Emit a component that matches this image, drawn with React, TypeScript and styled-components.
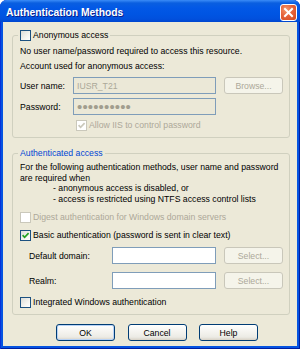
import React from "react";
import styled, { createGlobalStyle } from "styled-components";

const GlobalStyle = createGlobalStyle`
  html, body { margin: 0; padding: 0; background: #ffffff; }
  body {
    font-family: "Liberation Sans", Arial, sans-serif;
    font-size: 8.7px;
    color: #000000;
  }
  * { box-sizing: border-box; }
`;

const Window = styled.div`
  width: 300px;
  height: 349px;
  display: flex;
  flex-direction: column;
  background: #0553e1;
  border-radius: 7px 7px 0 0;
  overflow: hidden;
  box-shadow: inset 1px 0 0 #0831d9, inset -1px 0 0 #001ea0, inset 0 -1px 0 #001ea0;
`;

const TitleBar = styled.div`
  height: 22px;
  flex: none;
  display: flex;
  align-items: center;
  justify-content: space-between;
  padding: 2px 3px 0 6px;
  background: linear-gradient(
    to bottom,
    #3b8cf7 0px,
    #0a5fe0 3px,
    #0258e6 8px,
    #0055e3 14px,
    #0150dd 19px,
    #0046cf 22px
  );
`;

const Title = styled.span`
  color: #ffffff;
  font-weight: bold;
  font-size: 10.3px;
  text-shadow: 1px 1px 0 #0a1e8c;
  margin-top: 1px;
`;

const CloseButton = styled.div`
  width: 17px;
  height: 17px;
  border: 1px solid #ffffff;
  border-radius: 3px;
  background: radial-gradient(circle at 35% 30%, #f59a6c 0%, #e6623a 45%, #d2491f 100%);
  display: flex;
  align-items: center;
  justify-content: center;
`;

const Body = styled.div`
  flex: 1;
  min-width: 0;
  margin: 0 3px 3px 3px;
  background: #ece9d8;
  display: flex;
  flex-direction: column;
  padding: 8px 7px 5px 9px;
`;

const GroupBox = styled.fieldset<{ $pt: number; $mt?: number }>`
  margin: ${(p) => p.$mt ?? 0}px 0 0 0;
  border: 1px solid #d0d0bf;
  border-radius: 3px;
  padding: ${(p) => p.$pt}px 6px 6px 7px;
  min-width: 0;
  display: flex;
  flex-direction: column;
`;

const Legend = styled.legend<{ $blue?: boolean }>`
  padding: 0 2px;
  margin-left: -2px;
  height: 11px;
  line-height: 11px;
  display: flex;
  align-items: center;
  gap: 2px;
  color: ${(p) => (p.$blue ? "#0046d5" : "#000000")};
`;

const Line = styled.div<{ $mt?: number }>`
  line-height: 11px;
  height: 11px;
  white-space: nowrap;
  margin-top: ${(p) => p.$mt ?? 0}px;
`;

const Description = styled.div`
  line-height: 10.5px;
  white-space: nowrap;
`;

const Indented = styled.div`
  padding-left: 33px;
`;

const FieldRow = styled.div<{ $mt: number; $label: number; $input: number }>`
  display: grid;
  grid-template-columns: ${(p) => p.$label}px ${(p) => p.$input}px 59px;
  column-gap: 8px;
  align-items: center;
  height: 17px;
  margin-top: ${(p) => p.$mt}px;
`;

const FieldLabel = styled.span<{ $indent?: number }>`
  padding-left: ${(p) => p.$indent ?? 0}px;
  white-space: nowrap;
`;

const TextBox = styled.div<{ $disabled?: boolean }>`
  height: 17px;
  border: 1px solid #7f9db9;
  background: ${(p) => (p.$disabled ? "#ebe8d7" : "#ffffff")};
  color: #aca899;
  padding-left: 3px;
  display: flex;
  align-items: center;
  white-space: nowrap;
  overflow: hidden;
`;

const Dots = styled.span`
  font-size: 15px;
  letter-spacing: 0.15px;
  color: #a19d8e;
  line-height: 1;
`;

const Button = styled.div<{ $disabled?: boolean; $default?: boolean }>`
  height: 17px;
  border-radius: 3px;
  display: flex;
  align-items: center;
  justify-content: center;
  white-space: nowrap;
  border: 1px solid ${(p) => (p.$disabled ? "#c9c7ba" : "#003c74")};
  color: ${(p) => (p.$disabled ? "#aca899" : "#000000")};
  background: ${(p) =>
    p.$disabled
      ? "#f5f4ea"
      : "linear-gradient(to bottom, #ffffff 0%, #f6f5f1 40%, #ecebe5 80%, #d8d2c6 100%)"};
  box-shadow: ${(p) => (p.$default ? "inset 0 0 0 1px #b7d2f5" : "none")};
`;

const CheckRow = styled.div<{ $mt?: number; $indent?: number; $disabled?: boolean }>`
  display: flex;
  align-items: center;
  gap: 2px;
  height: 11px;
  line-height: 11px;
  white-space: nowrap;
  margin-top: ${(p) => p.$mt ?? 0}px;
  margin-left: ${(p) => p.$indent ?? 0}px;
  color: ${(p) => (p.$disabled ? "#aca899" : "#000000")};
`;

const Box = styled.span<{ $disabled?: boolean }>`
  width: 11px;
  height: 11px;
  flex: none;
  display: flex;
  align-items: center;
  justify-content: center;
  border: 1px solid ${(p) => (p.$disabled ? "#cac8bb" : "#1c5180")};
  background: ${(p) =>
    p.$disabled
      ? "#ffffff"
      : "linear-gradient(135deg, #dcdcd7 0%, #f4f4f0 60%, #ffffff 100%)"};
`;

const ButtonRow = styled.div`
  display: flex;
  gap: 12.5px;
  padding-left: 44px;
  margin-top: 9px;
`;

const DialogButton = styled(Button)`
  width: 59px;
`;

function CheckBox({ checked, disabled }: { checked?: boolean; disabled?: boolean }) {
  return (
    <Box $disabled={disabled}>
      {checked && (
        <svg width="9" height="9" viewBox="0 0 9 9">
          <path
            d="M1.6 4.2 L3.6 6.3 L7.6 2.2"
            fill="none"
            stroke={disabled ? "#cac8bb" : "#21a121"}
            strokeWidth="1.7"
          />
        </svg>
      )}
    </Box>
  );
}

export default function App() {
  return (
    <>
      <GlobalStyle />
      <Window>
        <TitleBar>
          <Title>Authentication Methods</Title>
          <CloseButton>
            <svg width="11" height="11" viewBox="0 0 11 11">
              <path d="M2 2 L9 9 M9 2 L2 9" stroke="#ffffff" strokeWidth="2" strokeLinecap="square" />
            </svg>
          </CloseButton>
        </TitleBar>
        <Body>
          <GroupBox $pt={5}>
            <Legend>
              <CheckBox />
              <span>Anonymous access</span>
            </Legend>
            <Line>No user name/password required to access this resource.</Line>
            <Line $mt={4}>Account used for anonymous access:</Line>
            <FieldRow $mt={5} $label={45} $input={143}>
              <FieldLabel>User name:</FieldLabel>
              <TextBox $disabled>IUSR_T21</TextBox>
              <Button $disabled>Browse...</Button>
            </FieldRow>
            <FieldRow $mt={4} $label={45} $input={143}>
              <FieldLabel>Password:</FieldLabel>
              <TextBox $disabled>
                <Dots>••••••••••</Dots>
              </TextBox>
            </FieldRow>
            <CheckRow $mt={5} $indent={56} $disabled>
              <CheckBox checked disabled />
              <span>Allow IIS to control password</span>
            </CheckRow>
          </GroupBox>

          <GroupBox $pt={3} $mt={10}>
            <Legend $blue>Authenticated access</Legend>
            <Description>
              <div>For the following authentication methods, user name and password</div>
              <div>are required when</div>
              <Indented>- anonymous access is disabled, or</Indented>
              <Indented>- access is restricted using NTFS access control lists</Indented>
            </Description>
            <CheckRow $mt={8} $disabled>
              <CheckBox disabled />
              <span>Digest authentication for Windows domain servers</span>
            </CheckRow>
            <CheckRow $mt={7}>
              <CheckBox checked />
              <span>Basic authentication (password is sent in clear text)</span>
            </CheckRow>
            <FieldRow $mt={6} $label={84} $input={104}>
              <FieldLabel $indent={9}>Default domain:</FieldLabel>
              <TextBox />
              <Button $disabled>Select...</Button>
            </FieldRow>
            <FieldRow $mt={8} $label={84} $input={104}>
              <FieldLabel $indent={9}>Realm:</FieldLabel>
              <TextBox />
              <Button $disabled>Select...</Button>
            </FieldRow>
            <CheckRow $mt={8}>
              <CheckBox />
              <span>Integrated Windows authentication</span>
            </CheckRow>
          </GroupBox>

          <ButtonRow>
            <DialogButton $default>OK</DialogButton>
            <DialogButton>Cancel</DialogButton>
            <DialogButton>Help</DialogButton>
          </ButtonRow>
        </Body>
      </Window>
    </>
  );
}
